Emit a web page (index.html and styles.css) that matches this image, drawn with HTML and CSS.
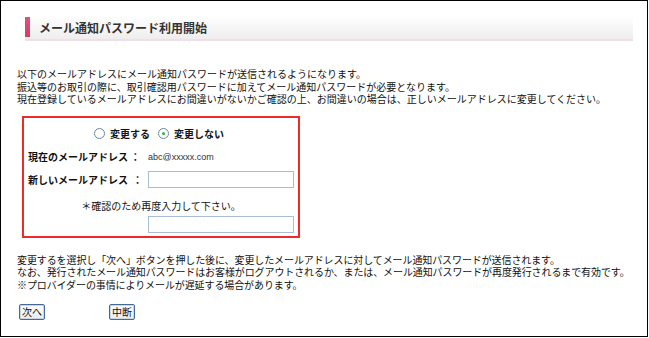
FILE: index.html
```html
<!DOCTYPE html>
<html lang="ja">
<head>
  <meta charset="UTF-8">
  <title>メール通知パスワード利用開始</title>
  <link rel="stylesheet" href="styles.css">
</head>
<body>
  <div class="frame">
    <h1 class="title"><span class="mark"></span>メール通知パスワード利用開始</h1>

    <p class="intro">
      以下のメールアドレスにメール通知パスワードが送信されるようになります。<br>
      振込等のお取引の際に、取引確認用パスワードに加えてメール通知パスワードが必要となります。<br>
      現在登録しているメールアドレスにお間違いがないかご確認の上、お間違いの場合は、正しいメールアドレスに変更してください。
    </p>

    <div class="box">
      <div class="radios">
        <label class="radio"><span class="dot"></span>変更する</label>
        <label class="radio"><span class="dot on"></span>変更しない</label>
      </div>
      <div class="row">
        <span class="label">現在のメールアドレス ：</span>
        <span class="value">abc@xxxxx.com</span>
      </div>
      <div class="row row-new">
        <span class="label">新しいメールアドレス&nbsp; ：</span>
        <input type="text" class="field">
      </div>
      <div class="note">＊確認のため再度入力して下さい。</div>
      <div class="row row-last">
        <span class="label"></span>
        <input type="text" class="field">
      </div>
    </div>

    <p class="notes">
      変更するを選択し「次へ」ボタンを押した後に、変更したメールアドレスに対してメール通知パスワードが送信されます。<br>
      なお、発行されたメール通知パスワードはお客様がログアウトされるか、または、メール通知パスワードが再度発行されるまで有効です。<br>
      ※プロバイダーの事情によりメールが遅延する場合があります。
    </p>

    <div class="buttons">
      <button class="btn">次へ</button>
      <button class="btn">中断</button>
    </div>
  </div>
</body>
</html>
```

FILE: styles.css
```css
* { box-sizing: border-box; margin: 0; padding: 0; }
body { background: #fff; color: #111; font-family: "Noto Sans CJK JP", sans-serif; font-size: 10px; }

.frame { width: 648px; height: 337px; border: 1px solid #000; padding: 14px 14px 0 16px; }

.title { display: flex; align-items: center; margin-left: 8px; width: 608px; height: 26px; font-size: 12px; font-weight: 700; color: #333; background: linear-gradient(#fff, #eeeeee); border-bottom: 2px solid #f1dfe4; }
.title .mark { width: 5px; height: 20px; background: linear-gradient(#e2527c, #d33e68); margin-right: 9px; }

.intro { margin-top: 27px; line-height: 12.5px; white-space: nowrap; }

.box { width: 278px; height: 122px; margin: 10px 0 0 5px; border: 2px solid #ee2a2a; padding: 0 4px; }
.radios { display: flex; justify-content: center; gap: 8px; margin-top: 7px; height: 18px; align-items: center; font-weight: 700; padding-right: 4px; }
.radio { display: flex; align-items: center; gap: 5px; }
.dot { width: 11px; height: 11px; border: 1px solid #6a86a8; border-radius: 50%; background: #fff; position: relative; }
.dot.on::after { content: ""; position: absolute; left: 3px; top: 3px; width: 3px; height: 3px; border-radius: 50%; background: #2fae3c; }

.row { display: flex; align-items: center; height: 20px; margin-top: 4px; }
.row-new { margin-top: 3px; }
.row-last { margin-top: 0; height: 17px; }
.label { width: 120px; font-weight: 700; }
.value { font-family: "Liberation Sans", sans-serif; font-size: 9px; color: #333; }
.field { width: 146px; height: 17px; border: 1px solid #a9bdd6; background: #fff; }
.note { height: 20px; margin-top: 6px; display: flex; align-items: center; justify-content: center; }

.notes { margin-top: 16px; line-height: 12.5px; white-space: nowrap; letter-spacing: -0.1px; }

.buttons { display: flex; gap: 64px; margin: 13px 0 0 2px; }
.btn { font-family: "Noto Sans CJK JP", sans-serif; font-size: 10px; color: #111; height: 16px; padding: 0 2px; line-height: 12px; border: 1px solid #46689a; border-radius: 2px; background: linear-gradient(#fdfdfd, #e8edf3); box-shadow: inset 0 0 0 1px #c8d6e8; }
```
